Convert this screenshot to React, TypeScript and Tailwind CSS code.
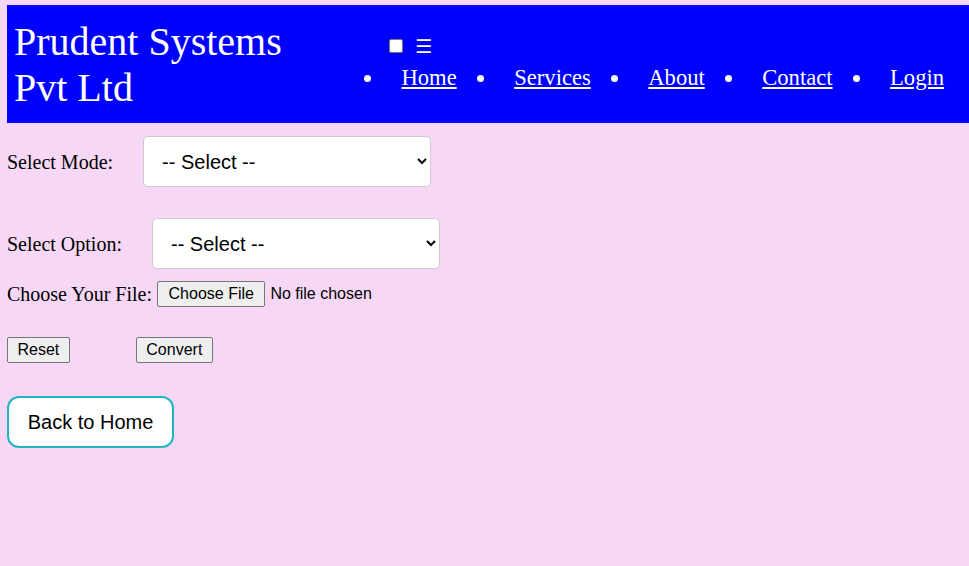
import React from "react";

const links = ["Home", "Services", "About", "Contact", "Login"];

export default function App() {
  return (
    <div className="min-h-[566px] w-full bg-[#f6d8f6] pt-[5px] pl-[7px] font-['Liberation_Serif',serif] text-black">
      {/* Header */}
      <header className="flex h-[118px] bg-[#0000ff] text-white">
        <div className="w-[357px] shrink-0 pl-[7px] pt-[14px]">
          <h1 className="w-[290px] text-[40px] leading-[46px]">Prudent Systems Pvt Ltd</h1>
        </div>
        <nav className="pt-[31px]">
          <div className="ml-[25px] flex h-[20px] items-center">
            <input
              type="checkbox"
              className="m-0 h-[14px] w-[14px] appearance-none rounded-[2px] border border-[#767676] bg-white"
            />
            <span className="ml-[12px] font-['DejaVu_Sans',sans-serif] text-[19px] leading-none">☰</span>
          </div>
          <ul className="mt-[9px] flex gap-[20px]">
            {links.map((l) => (
              <li key={l} className="flex items-center">
                <span className="h-[7px] w-[7px] rounded-full bg-white" />
                <a href="#" className="ml-[30.5px] text-[22.6px] leading-[26px] underline">
                  {l}
                </a>
              </li>
            ))}
          </ul>
        </nav>
      </header>

      {/* Form */}
      <div className="mt-[13px] flex items-center">
        <label className="text-[20px]">Select Mode:</label>
        <select className="ml-[30px] h-[51px] w-[288px] rounded-[5px] border border-[#cccccc] bg-white pl-[14px] pr-[6px] font-['Liberation_Sans',sans-serif] text-[20px]">
          <option>-- Select --</option>
        </select>
      </div>

      <div className="mt-[31px] flex items-center">
        <label className="text-[20px]">Select Option:</label>
        <select className="ml-[30px] h-[51px] w-[288px] rounded-[5px] border border-[#cccccc] bg-white pl-[14px] pr-[6px] font-['Liberation_Sans',sans-serif] text-[20px]">
          <option>-- Select --</option>
        </select>
      </div>

      <div className="mt-[10px] flex items-center">
        <label className="text-[20px]">Choose Your File:</label>
        <input
          type="file"
          className="ml-[5px] font-['Liberation_Sans',sans-serif] text-[16px] file:mr-[5px] file:h-[26px] file:rounded-[2px] file:border file:border-[#767676] file:bg-[#efefef] file:px-[10.5px] file:text-[16px]"
        />
      </div>

      <div className="mt-[28px] flex items-center font-['Liberation_Sans',sans-serif] text-[16px]">
        <button className="h-[26px] rounded-[2px] border border-[#767676] bg-[#efefef] px-[9.5px]">Reset</button>
        <button className="ml-[66px] h-[26px] rounded-[2px] border border-[#767676] bg-[#efefef] px-[9.5px]">Convert</button>
      </div>

      <button className="mt-[33px] h-[52px] w-[167px] rounded-[12px] border-2 border-[#20b5c0] bg-white font-['Liberation_Sans',sans-serif] text-[20px]">
        Back to Home
      </button>
    </div>
  );
}
